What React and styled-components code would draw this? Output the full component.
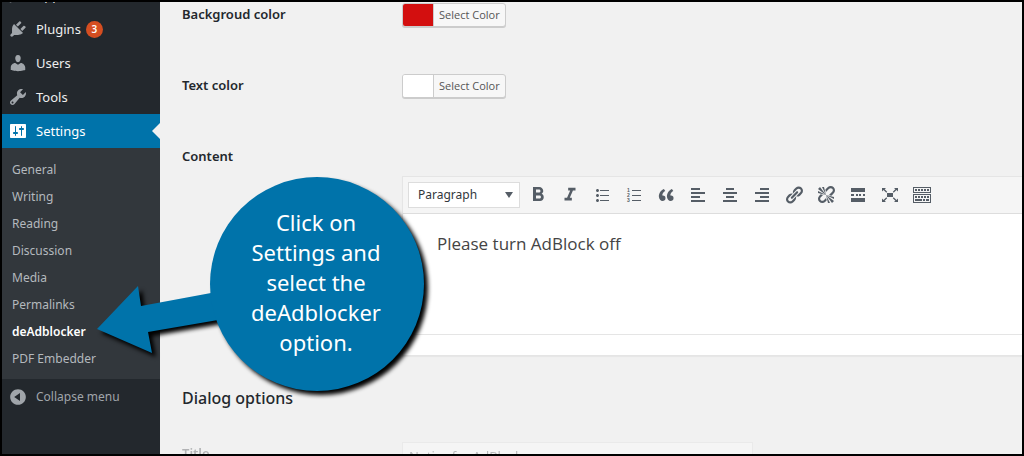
import { useState } from 'react';
import styled, { createGlobalStyle } from 'styled-components';
import { MdFormatBold, MdFormatItalic } from 'react-icons/md';

const ICONS = {
  appearance: 'M14.48 11.06L7.41 3.99l1.5-1.5c.5-.56 2.3-.47 3.51.32 1.21.8 1.43 1.28 2.91 2.1 1.18.64 2.45 1.26 4.45.85zm-.71.71L6.7 4.7 4.93 6.47c-.39.39-.39 1.02 0 1.41l1.06 1.06c.39.39.39 1.03 0 1.42-.6.6-1.43 1.11-2.21 1.69-.35.26-.7.53-1.01.84C1.43 14.23.4 16.08 1.4 17.07c.99 1 2.84-.03 4.18-1.36.31-.31.58-.66.85-1.02.57-.78 1.08-1.61 1.69-2.21.39-.39 1.02-.39 1.41 0l1.06 1.06c.39.39 1.02.39 1.41 0z',
  plugins: 'M13.11 4.36L9.87 7.6 8 5.73l3.24-3.24c.35-.34 1.05-.2 1.56.32.52.51.66 1.21.31 1.55zm-8 1.77l.91-1.12 9.01 9.01-1.19.84c-.71.71-2.63 1.16-3.82 1.16H6.14L4.9 17.26c-.59.59-1.54.59-2.12 0-.59-.58-.59-1.53 0-2.12l1.24-1.24v-3.88c0-1.13.4-3.19 1.09-3.89zm7.26 3.97l3.24-3.24c.34-.35 1.04-.21 1.55.31.52.51.66 1.21.31 1.55l-3.24 3.25z',
  users: 'M10 9.25c-2.27 0-2.73-3.44-2.73-3.44C7 4.02 7.82 2 9.97 2c2.16 0 2.98 2.02 2.71 3.81 0 0-.41 3.44-2.68 3.44zm0 2.57L12.72 10c2.39 0 4.52 2.33 4.52 4.53v2.49s-3.65 1.13-7.24 1.13c-3.65 0-7.24-1.13-7.24-1.13v-2.49c0-2.25 1.94-4.48 4.47-4.48z',
  tools: 'M16.68 9.77c-1.34 1.34-3.3 1.67-4.95.99l-5.41 6.52c-.99.99-2.59.99-3.58 0s-.99-2.59 0-3.57l6.52-5.42c-.68-1.65-.35-3.61.99-4.95 1.28-1.28 3.12-1.62 4.72-1.06l-2.89 2.89 2.82 2.82 2.86-2.87c.53 1.58.18 3.39-1.08 4.65zM3.81 16.21c.4.39 1.04.39 1.43 0 .4-.4.4-1.04 0-1.43-.39-.4-1.03-.4-1.43 0-.39.39-.39 1.03 0 1.43z',
  settings: 'M18 16V4c0-.55-.45-1-1-1H3c-.55 0-1 .45-1 1v12c0 .55.45 1 1 1h14c.55 0 1-.45 1-1zM8 11h1c.55 0 1 .45 1 1s-.45 1-1 1H8v1.5c0 .28-.22.5-.5.5s-.5-.22-.5-.5V13H6c-.55 0-1-.45-1-1s.45-1 1-1h1V5.5c0-.28.22-.5.5-.5s.5.22.5.5V11zm5-2h-1c-.55 0-1-.45-1-1s.45-1 1-1h1V5.5c0-.28.22-.5.5-.5s.5.22.5.5V7h1c.55 0 1 .45 1 1s-.45 1-1 1h-1v5.5c0 .28-.22.5-.5.5s-.5-.22-.5-.5V9z',
  collapse: 'M10 2.16c4.33 0 7.84 3.51 7.84 7.84s-3.51 7.84-7.84 7.84S2.16 14.33 2.16 10 5.71 2.16 10 2.16zm2 11.72V6.12L6.18 9.97z',
  bullets: 'M5.5 7C4.67 7 4 6.33 4 5.5 4 4.68 4.67 4 5.5 4 6.32 4 7 4.68 7 5.5 7 6.33 6.32 7 5.5 7zM8 5h9v1H8V5zm-2.5 7c-.83 0-1.5-.67-1.5-1.5C4 9.68 4.67 9 5.5 9c.82 0 1.5.68 1.5 1.5 0 .83-.68 1.5-1.5 1.5zM8 10h9v1H8v-1zm-2.5 7c-.83 0-1.5-.67-1.5-1.5 0-.82.67-1.5 1.5-1.5.82 0 1.5.68 1.5 1.5 0 .83-.68 1.5-1.5 1.5zM8 15h9v1H8v-1z',
  quote: 'M9.49 13.22c0-.74-.2-1.38-.61-1.9-.62-.78-1.83-.88-2.53-.72-.29-1.65 1.11-3.75 2.92-4.65L7.88 4c-2.73 1.3-5.42 4.28-4.96 8.05C3.21 14.43 4.59 16 6.54 16c.85 0 1.56-.25 2.12-.75s.83-1.18.83-2.03zm8.05 0c0-.74-.2-1.38-.61-1.9-.63-.78-1.83-.88-2.53-.72-.29-1.65 1.11-3.75 2.92-4.65L15.93 4c-2.73 1.3-5.41 4.28-4.95 8.05.29 2.38 1.66 3.95 3.61 3.95.85 0 1.56-.25 2.12-.75s.83-1.18.83-2.03z',
  alignLeft: 'M12 5V3H3v2h9zm5 4V7H3v2h14zm-5 4v-2H3v2h9zm5 4v-2H3v2h14z',
  alignCenter: 'M14 5V3H6v2h8zm3 4V7H3v2h14zm-3 4v-2H6v2h8zm3 4v-2H3v2h14z',
  alignRight: 'M17 5V3H8v2h9zm0 4V7H3v2h14zm0 4v-2H8v2h9zm0 4v-2H3v2h14z',
  link: 'M17.74 2.76c1.68 1.69 1.68 4.41 0 6.1l-1.53 1.52c-1.12 1.12-2.7 1.47-4.14 1.09l2.62-2.61.76-.77.76-.76c.84-.84.84-2.2 0-3.04-.84-.85-2.2-.85-3.04 0l-.77.76-3.38 3.38c-.37-1.44-.02-3.02 1.1-4.14l1.52-1.53c1.69-1.68 4.42-1.68 6.1 0zM8.59 13.43l5.34-5.34c.42-.42.42-1.1 0-1.52-.44-.43-1.13-.39-1.53 0l-5.33 5.34c-.42.42-.42 1.1 0 1.52.44.43 1.13.39 1.52 0zm-.76 2.29l4.14-4.15c.38 1.44.03 3.02-1.09 4.14l-1.52 1.53c-1.69 1.68-4.41 1.68-6.1 0-1.68-1.68-1.68-4.42 0-6.1l1.53-1.52c1.12-1.12 2.7-1.47 4.14-1.1l-4.14 4.15c-.85.84-.85 2.2 0 3.05.84.84 2.2.84 3.04 0z',
  unlink: 'M17.74 2.26c1.68 1.69 1.68 4.41 0 6.1l-1.53 1.52c-.32.33-.69.58-1.08.77L13 10l1.69-1.64.76-.77.76-.76c.84-.84.84-2.2 0-3.04-.84-.85-2.2-.85-3.04 0l-.77.76-.76.76L10 7l-.65-2.14c.19-.38.44-.75.77-1.07l1.52-1.53c1.69-1.68 4.42-1.68 6.1 0zM2 4l8 6-6-8zm4-2l4 8-2-8H6zM2 6l8 4-8-2V6zm7.36 7.69L10 13l.74 2.35-1.38 1.39c-1.69 1.68-4.41 1.68-6.1 0-1.68-1.68-1.68-4.42 0-6.1l1.39-1.38L7 10l-.69.64-1.52 1.53c-.85.84-.85 2.2 0 3.04.84.85 2.2.85 3.04 0zM18 16l-8-6 6 8zm-4 2l-4-8 2 8h2zm4-4l-8-4 8 2v2z',
  more: 'M3 3h14v4H3zM3 9h3v2H3zM8 9h2v2H8zM11 9h2v2h-2zM15 9h2v2h-2zM3 13h14v4H3z',
  fullscreen: 'M7 8h6v4H7zM2 3h4L4.700 4.300 7.200 6.800 6.300 7.700 3.500 5 2 6.500zM18 3v3.500L16.500 5l-2.800 2.700-.9-.9 2.500-2.500L14 3zM2 17v-3.500L3.500 15l2.800-2.700.9.9-2.500 2.500L6 17zM18 17h-4l1.300-1.300-2.500-2.500.9-.9 2.800 2.700 1.500-1.500z',
};

const menuItems = [
  { label: 'Appearance', icon: 'appearance' },
  { label: 'Plugins', icon: 'plugins', count: 3 },
  { label: 'Users', icon: 'users' },
  { label: 'Tools', icon: 'tools' },
  { label: 'Settings', icon: 'settings', active: true },
];

const subItems = ['General', 'Writing', 'Reading', 'Discussion', 'Media', 'Permalinks', 'deAdblocker', 'PDF Embedder'];

const Icon = ({ name }) => (
  <IconSvg viewBox="0 0 20 20" aria-hidden="true">
    <path d={ICONS[name]} />
  </IconSvg>
);

const NumberedIcon = () => (
  <IconSvg viewBox="0 0 20 20" aria-hidden="true">
    <text x="3" y="7">1</text>
    <text x="3" y="12">2</text>
    <text x="3" y="17">3</text>
    <path d="M8 5h9v1H8zM8 10h9v1H8zM8 15h9v1H8z" />
  </IconSvg>
);

const KeyboardIcon = () => (
  <IconSvg viewBox="0 0 20 20" aria-hidden="true">
    <path fillRule="evenodd" d="M1 2h18v6H1zM2 3v4h16V3zM1 9h18v9H1zM2 10v7h16v-7z" />
    <path d="M3 4h2v2H3zM6 4h2v2H6zM9 4h2v2H9zM12 4h2v2h-2zM15 4h2v2h-2zM3 11h2v2H3zM6 11h2v2H6zM9 11h2v2H9zM12 11h2v2h-2zM15 11h2v2h-2zM3 14h7v2H3zM11 14h2v2h-2zM14 14h3v2h-3z" />
  </IconSvg>
);

const tools = [
  { label: 'Bold', icon: <MdFormatBold size={24} /> },
  { label: 'Italic', icon: <MdFormatItalic size={22} /> },
  { label: 'Bulleted list', icon: <Icon name="bullets" /> },
  { label: 'Numbered list', icon: <NumberedIcon /> },
  { label: 'Blockquote', icon: <Icon name="quote" /> },
  { label: 'Align left', icon: <Icon name="alignLeft" /> },
  { label: 'Align center', icon: <Icon name="alignCenter" /> },
  { label: 'Align right', icon: <Icon name="alignRight" /> },
  { label: 'Insert link', icon: <Icon name="link" /> },
  { label: 'Remove link', icon: <Icon name="unlink" /> },
  { label: 'Read more', icon: <Icon name="more" /> },
  { label: 'Fullscreen', icon: <Icon name="fullscreen" /> },
  { label: 'Toolbar toggle', icon: <KeyboardIcon /> },
];

const ColorRow = ({ id, label, color }) => (
  <Row>
    <Label htmlFor={id}>{label}</Label>
    <ColorButton id={id} type="button">
      <Swatch $color={color} />
      <span>Select Color</span>
    </ColorButton>
  </Row>
);

const Editor = () => {
  const [content, setContent] = useState('Please turn AdBlock off');

  return (
    <EditorBox>
      <Toolbar>
        <SelectBox>
          <select aria-label="Format" defaultValue="Paragraph">
            <option>Paragraph</option>
            <option>Heading 1</option>
            <option>Heading 2</option>
          </select>
          <svg viewBox="0 0 8 6" aria-hidden="true">
            <path d="M0 0h8L4 6z" />
          </svg>
        </SelectBox>
        {tools.map(({ label, icon }) => (
          <ToolButton key={label} type="button" aria-label={label}>{icon}</ToolButton>
        ))}
      </Toolbar>
      <EditorText id="content" value={content} onChange={(event) => setContent(event.target.value)} />
      <StatusBar />
    </EditorBox>
  );
};

const App = () => {
  const [title, setTitle] = useState('Notice for AdBlock users');

  return (
    <Page>
      <GlobalStyle />
      <Sidebar>
        <Menu>
          {menuItems.map(({ label, icon, count, active }) => (
            <li key={label}>
              <MenuLink href="#" $active={active}>
                <Icon name={icon} />
                {label}
                {count && <Badge>{count}</Badge>}
              </MenuLink>
            </li>
          ))}
        </Menu>
        <SubMenu>
          {subItems.map((item) => (
            <li key={item}>
              <SubLink href="#" $current={item === 'deAdblocker'}>{item}</SubLink>
            </li>
          ))}
        </SubMenu>
        <CollapseButton type="button">
          <Icon name="collapse" />
          Collapse menu
        </CollapseButton>
      </Sidebar>
      <Main>
        <ColorRow id="background" label="Backgroud color" color="#d30f0f" />
        <ColorRow id="text" label="Text color" color="#ffffff" />
        <Row>
          <Label htmlFor="content">Content</Label>
          <Editor />
        </Row>
        <Heading>Dialog options</Heading>
        <Row $faded>
          <Label htmlFor="title">Title</Label>
          <TextInput id="title" value={title} onChange={(event) => setTitle(event.target.value)} />
        </Row>
      </Main>
      <Callout>
        <svg viewBox="0 0 328 216" aria-hidden="true">
          <path d="M0 153L41 110L44 130L114 117L121 144L51 156L55 177Z" />
          <circle cx="220" cy="108" r="107" />
        </svg>
        <p>Click on<br />Settings and<br />select the<br />deAdblocker<br />option.</p>
      </Callout>
    </Page>
  );
};

const GlobalStyle = createGlobalStyle`
  * {
    box-sizing: border-box;
  }

  body {
    margin: 0;
    background: #f1f1f1;
    color: #23282d;
    font: 13px/18px 'Noto Sans', 'Open Sans', sans-serif;
  }

  button, input, select, textarea {
    font: inherit;
    color: inherit;
  }

  ul {
    list-style: none;
    margin: 0;
    padding: 0;
  }
`;

const Page = styled.div`
  position: relative;
  display: flex;
  height: 100vh;
  overflow: hidden;
  border: 2px solid #000;
`;

const Sidebar = styled.nav`
  flex: 0 0 158px;
  background: #23282d;
`;

const IconSvg = styled.svg`
  width: 20px;
  height: 20px;
  flex-shrink: 0;
  fill: currentColor;

  text {
    font: bold 5px 'Liberation Sans', sans-serif;
  }
`;

/* the first entry is scrolled halfway out at the top */
const Menu = styled.ul`
  margin-top: -24px;
`;

const MenuLink = styled.a`
  position: relative;
  display: flex;
  align-items: center;
  height: 34px;
  padding-left: 6px;
  color: ${({ $active }) => ($active ? '#fff' : '#eee')};
  background: ${({ $active }) => ($active ? '#0073aa' : 'transparent')};
  text-decoration: none;

  svg {
    margin-right: 8px;
    color: ${({ $active }) => ($active ? '#fff' : '#a0a5aa')};
  }

  &::after {
    content: '';
    display: ${({ $active }) => ($active ? 'block' : 'none')};
    position: absolute;
    right: 0;
    border: 8px solid transparent;
    border-left: none;
    border-right-color: #f1f1f1;
  }
`;

const Badge = styled.span`
  width: 17px;
  margin-left: 5px;
  border-radius: 9px;
  background: #d54e21;
  color: #fff;
  font-size: 10px;
  font-weight: 600;
  line-height: 17px;
  text-align: center;
`;

const SubMenu = styled.ul`
  padding: 8px 0 7px;
  background: #32373c;
`;

const SubLink = styled.a`
  display: block;
  padding-left: 10px;
  color: ${({ $current }) => ($current ? '#fff' : '#b4b9be')};
  font-size: 12px;
  font-weight: ${({ $current }) => ($current ? 600 : 400)};
  line-height: 27px;
  text-decoration: none;
`;

const CollapseButton = styled.button`
  display: flex;
  align-items: center;
  gap: 8px;
  width: 100%;
  height: 35px;
  padding: 0 6px;
  border: none;
  background: none;
  color: #a0a5aa;
  font-size: 12px;
`;

const Main = styled.main`
  flex: 1;
  min-width: 0;
  padding-left: 22px;
`;

const Row = styled.div`
  display: flex;
  align-items: flex-start;
  min-height: 71px;
  padding-top: 1px;
  opacity: ${({ $faded }) => ($faded ? 0.3 : 1)};
`;

const Label = styled.label`
  flex: 0 0 220px;
  font-weight: 600;
  line-height: 22px;
`;

const ColorButton = styled.button`
  display: flex;
  height: 24px;
  padding: 0;
  overflow: hidden;
  border: 1px solid #ccc;
  border-radius: 3px;
  background: #f7f7f7;
  box-shadow: 0 1px 0 #ccc;
  color: #555;
  font-family: 'Open Sans', 'Noto Sans', sans-serif;
  font-size: 11px;
  line-height: 22px;

  span:last-child {
    padding: 0 5px;
    border-left: 1px solid #ccc;
  }
`;

const Swatch = styled.span`
  width: 30px;
  background: ${({ $color }) => $color};
`;

const EditorBox = styled.div`
  flex: 1;
  min-width: 0;
  margin-top: 31px;
  border: 1px solid #e5e5e5;
  border-right: none;
  background: #fff;
  box-shadow: 0 1px 1px rgba(0, 0, 0, 0.04);
`;

const Toolbar = styled.div`
  display: flex;
  align-items: center;
  gap: 4px;
  padding: 5px;
  border-bottom: 1px solid #ddd;
  background: #f5f5f5;
`;

const SelectBox = styled.div`
  display: grid;
  align-items: center;
  width: 112px;

  select, svg {
    grid-area: 1 / 1;
  }

  select {
    height: 26px;
    padding: 0 9px;
    appearance: none;
    border: 1px solid #ddd;
    border-radius: 0;
    background: #fff;
    color: #32373c;
    font-size: 12px;
  }

  svg {
    justify-self: end;
    width: 8px;
    height: 6px;
    margin-right: 7px;
    fill: #555d66;
    pointer-events: none;
  }
`;

const ToolButton = styled.button`
  display: flex;
  align-items: center;
  justify-content: center;
  width: 28px;
  height: 26px;
  padding: 0;
  border: none;
  background: none;
  color: #555d66;
`;

const EditorText = styled.textarea`
  display: block;
  width: 100%;
  height: 121px;
  padding: 18px 34px;
  resize: none;
  border: none;
  border-bottom: 1px solid #e5e5e5;
  outline: none;
  background: #fff;
  color: #444;
  font-family: 'Open Sans', 'Noto Sans', sans-serif;
  font-size: 17px;
  line-height: 24px;
`;

const StatusBar = styled.div`
  height: 20px;
`;

const Heading = styled.h2`
  margin: 30px 0 31px;
  font-size: 16px;
  font-weight: 500;
  line-height: 24px;
`;

const TextInput = styled.input`
  width: 351px;
  height: 27px;
  padding: 0 6px;
  border: 1px solid #ddd;
  background: #fff;
  color: #32373c;
`;

const Callout = styled.div`
  position: absolute;
  top: 174px;
  left: 95px;
  display: grid;
  grid-template-columns: 114px 214px;
  align-items: center;
  width: 328px;
  height: 216px;
  color: #fff;
  font-size: 22px;
  line-height: 30px;
  text-align: center;

  svg {
    grid-area: 1 / 1 / 2 / 3;
    overflow: visible;
    fill: #0073aa;
    filter: drop-shadow(4px 4px 2px #000);
  }

  p {
    grid-area: 1 / 2;
    z-index: 1;
    margin: 0;
    padding: 0 4px 4px 0;
  }
`;

export default App;
